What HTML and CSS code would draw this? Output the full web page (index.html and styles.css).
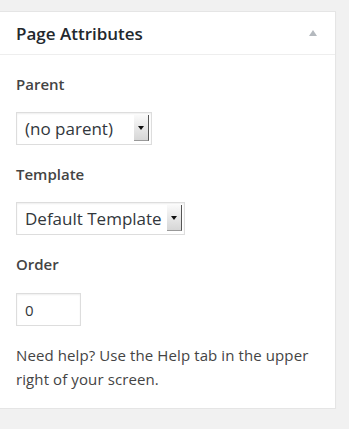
FILE: index.html
```html
<!DOCTYPE html>
<html lang="en">
<head>
    <meta charset="UTF-8">
    <meta name="viewport" content="width=device-width, initial-scale=1.0">
    <title>Page Attributes</title>
    <link rel="stylesheet" href="styles.css">
</head>
<body>
    <div class="postbox">
        <div class="postbox-header">
            <h2>Page Attributes</h2>
            <span class="toggle-arrow"></span>
        </div>
        <div class="inside">
            <p class="field-label">Parent</p>
            <label class="select-wrap">
                <select name="parent_id" class="parent-select">
                    <option>(no parent)</option>
                </select>
                <span class="select-btn"></span>
            </label>

            <p class="field-label">Template</p>
            <label class="select-wrap">
                <select name="page_template" class="template-select">
                    <option>Default Template</option>
                </select>
                <span class="select-btn"></span>
            </label>

            <p class="field-label">Order</p>
            <input type="text" class="order-input" name="menu_order" value="0">

            <p class="help">Need help? Use the Help tab in the upper right of your screen.</p>
        </div>
    </div>
</body>
</html>
```

FILE: styles.css
```css
body {
    margin: 0;
    background-color: #f1f1f1;
    font-family: "Open Sans", "Liberation Sans", sans-serif;
    color: #444;
}
.postbox {
    width: 335px;
    margin: 11px 0 0 -1px;
    background-color: #fff;
    border: 1px solid #e5e5e5;
    box-shadow: 0 1px 1px rgba(0, 0, 0, 0.04);
}
.postbox-header {
    display: flex;
    align-items: center;
    justify-content: space-between;
    height: 42px;
    padding: 0 18px 0 16px;
    border-bottom: 1px solid #eee;
}
.postbox-header h2 {
    margin: 0;
    font-size: 17px;
    font-weight: 600;
    color: #23282d;
}
.toggle-arrow {
    width: 0;
    height: 0;
    border-left: 4px solid transparent;
    border-right: 4px solid transparent;
    border-bottom: 6px solid #b4b9be;
}
.inside {
    display: flex;
    flex-direction: column;
    align-items: flex-start;
    padding: 19px 16px 17px;
}
.field-label {
    margin: 0 0 18px;
    font-size: 15px;
    font-weight: 600;
    line-height: 20px;
    color: #444;
}
.select-wrap {
    position: relative;
    display: block;
    margin-bottom: 19px;
}
.select-wrap select {
    -webkit-appearance: none;
    appearance: none;
    display: block;
    height: 33px;
    padding: 0 8px;
    font-family: inherit;
    font-size: 17px;
    color: #32373c;
    background-color: #fff;
    border: 1px solid #ddd;
    border-radius: 0;
    box-shadow: inset 0 1px 2px rgba(0, 0, 0, 0.07);
}
.parent-select {
    width: 136px;
}
.template-select {
    width: 169px;
}
.select-btn {
    position: absolute;
    top: 3px;
    right: 3px;
    bottom: 4px;
    width: 14px;
    background: linear-gradient(#fafafa, #d6d6d6);
    border-right: 1px solid #555;
    border-bottom: 1px solid #999;
    pointer-events: none;
}
.select-btn::after {
    content: "";
    position: absolute;
    top: 50%;
    left: 4px;
    margin-top: -2px;
    border-left: 3px solid transparent;
    border-right: 3px solid transparent;
    border-top: 4px solid #111;
}
.order-input {
    width: 65px;
    height: 33px;
    box-sizing: border-box;
    margin: 1px 0 17px;
    padding: 0 8px;
    font-family: inherit;
    font-size: 15px;
    color: #32373c;
    border: 1px solid #ddd;
    box-shadow: inset 0 1px 2px rgba(0, 0, 0, 0.07);
}
.help {
    margin: 0;
    font-size: 15px;
    letter-spacing: 0.1px;
    line-height: 24px;
    color: #444;
}
```
